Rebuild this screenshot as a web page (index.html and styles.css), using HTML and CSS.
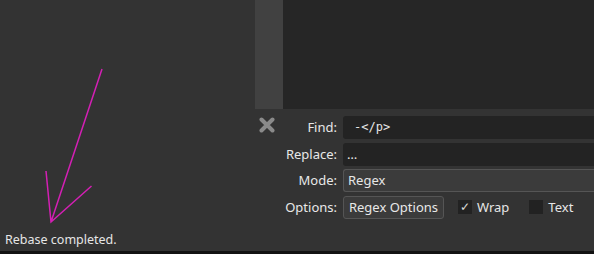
FILE: index.html
```html
<!DOCTYPE html>
<html lang="en">
<head>
    <meta charset="UTF-8">
    <title>Find and Replace</title>
    <link rel="stylesheet" href="styles.css">
</head>
<body>
    <div class="app">
        <div class="side">
            <div class="status">Rebase completed.</div>
        </div>
        <div class="main">
            <div class="editor">
                <div class="gutter"></div>
                <div class="code"></div>
            </div>
            <div class="find">
                <div class="close">
                    <svg width="16" height="16" viewBox="0 0 16 16">
                        <path d="M2.5 2.5 L13.5 13.5 M13.5 2.5 L2.5 13.5" stroke="#8a8a8a" stroke-width="4" stroke-linecap="round"/>
                    </svg>
                </div>
                <div class="form">
                    <label>Find:</label>
                    <div class="field mono">-&lt;/p&gt;</div>

                    <label>Replace:</label>
                    <div class="field replace">…</div>

                    <label>Mode:</label>
                    <div class="select">Regex</div>

                    <label>Options:</label>
                    <div class="options">
                        <button class="btn">Regex Options</button>
                        <span class="check"><span class="box">✓</span>Wrap</span>
                        <span class="check"><span class="box"></span>Text</span>
                    </div>
                </div>
            </div>
        </div>
    </div>
    <div class="bottom"></div>

    <!-- annotation arrow -->
    <svg class="arrow" width="120" height="240" viewBox="0 0 120 240">
        <path d="M102 69 L51 222 M46 171 L51 222 L91.5 186" stroke="#d41fb4" stroke-width="1.5" fill="none"/>
    </svg>
</body>
</html>
```

FILE: styles.css
```css
* {
    margin: 0;
    padding: 0;
    box-sizing: border-box;
}

body {
    background: #333333;
    color: #e6e6e6;
    font-family: "Noto Sans", sans-serif;
    font-size: 12px;
    width: 594px;
    height: 254px;
    overflow: hidden;
    position: relative;
}

.app {
    display: grid;
    grid-template-columns: 255px 1fr;
    height: 251px;
}

.side {
    display: flex;
    flex-direction: column;
    justify-content: flex-end;
    padding: 0 0 3px 5px;
}

.status {
    font-size: 12.5px;
    line-height: 16px;
}

.main {
    display: flex;
    flex-direction: column;
    min-width: 0;
}

.editor {
    display: flex;
    height: 109px;
}

.gutter {
    width: 28px;
    background: #414141;
}

.code {
    flex: 1;
    background: #262626;
}

.find {
    display: flex;
    padding-top: 7px;
    overflow: hidden;
}

.close {
    width: 28px;
    flex: none;
    padding: 1px 0 0 4px;
}

.close svg {
    display: block;
}

.form {
    display: grid;
    grid-template-columns: 54px minmax(0, 1fr);
    grid-auto-rows: 23px;
    column-gap: 6px;
    row-gap: 3.5px;
    flex: 1;
    min-width: 0;
}

.form label {
    text-align: right;
    font-size: 13px;
    line-height: 23px;
    color: #e8e8e8;
    white-space: nowrap;
}

.field {
    background: #232323;
    border-radius: 3px 0 0 3px;
    line-height: 23px;
    padding-left: 4px;
    font-size: 13px;
}

.mono {
    font-family: "DejaVu Sans Mono", monospace;
    font-size: 12px;
    padding-left: 11px;
}

.select {
    background: #3b3b3b;
    border: 1px solid #555555;
    border-right: none;
    border-radius: 3px 0 0 3px;
    line-height: 21px;
    padding-left: 4px;
    font-size: 13px;
}

.options {
    display: flex;
    align-items: center;
    min-width: 0;
}

.btn {
    width: 101px;
    height: 23px;
    flex: none;
    background: #3b3b3b;
    border: 1px solid #555555;
    border-radius: 3px;
    color: #e8e8e8;
    font-family: "Noto Sans", sans-serif;
    font-size: 13px;
    margin-right: 14px;
}

.check {
    display: flex;
    align-items: center;
    gap: 5px;
    font-size: 13px;
    margin-right: 20px;
}

.box {
    width: 14px;
    height: 14px;
    background: #222222;
    color: #d8d8d8;
    font-size: 12px;
    line-height: 14px;
    text-align: center;
}

.bottom {
    height: 3px;
    background: #121212;
}

.arrow {
    position: absolute;
    left: 0;
    top: 0;
}
```
